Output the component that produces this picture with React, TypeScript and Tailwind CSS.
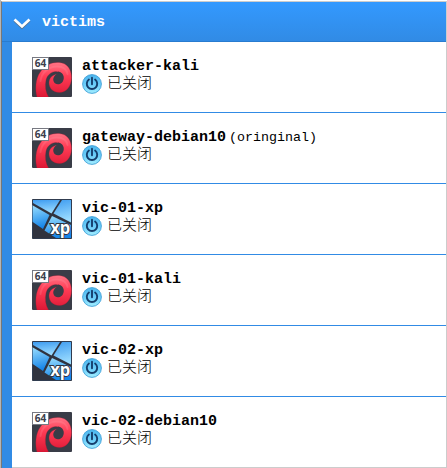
import React from 'react';

type Machine = { name: string; snapshot?: string; os: 'debian' | 'xp' };

const machines: Machine[] = [
  { name: 'attacker-kali', os: 'debian' },
  { name: 'gateway-debian10', snapshot: 'oringinal', os: 'debian' },
  { name: 'vic-01-xp', os: 'xp' },
  { name: 'vic-01-kali', os: 'debian' },
  { name: 'vic-02-xp', os: 'xp' },
  { name: 'vic-02-debian10', os: 'debian' },
];

function DebianIcon() {
  return (
    <svg width="40" height="40" viewBox="0 0 40 40" className="shrink-0">
      <defs>
        <linearGradient id="swirl" x1="0" y1="0" x2="0" y2="1">
          <stop offset="0" stopColor="#ff7586" />
          <stop offset="0.4" stopColor="#ff3c55" />
          <stop offset="1" stopColor="#dc1835" />
        </linearGradient>
      </defs>
      <rect width="40" height="40" rx="1" fill="#393c47" />
      <path
        d="M5 40C3 32 3.500 22 8 15.500C13 8 20 5 27 5.500C35 6 39.500 12 39.500 20.500C39.500 29.500 34 35.500 27.500 35.500C21 35.500 17 31 17 26C17 21 20.500 17.500 26 17C23.500 18.500 22 21 22.500 23.500C23.300 26.700 27 27.500 29.500 25C32.500 21.500 31 16.500 27 15C21 13 15.500 17 14 23C12.700 29 13.500 35 16.500 40Z"
        fill="url(#swirl)" stroke="#b01930" strokeWidth="0.3"
      />
      <path d="M26.500 16C22 18 20.500 21.500 21.700 24.500C23 27.700 27.500 28.500 30.500 25C33.500 20.500 31 15 26 14.500Z" fill="#393c47" />
      <path d="M8.500 24C9.500 16 16 9.500 25 9.500C31.500 9.500 35 13 35.500 17" fill="none" stroke="#ffa4b0" strokeWidth="2" strokeLinecap="round" opacity="0.2" />
      <rect x="0.500" y="0.500" width="16" height="12" fill="#fff" stroke="#777982" />
      <text x="8.500" y="10.300" textAnchor="middle" fontFamily="'Open Sans', sans-serif" fontWeight="700" fontSize="10" textLength="11.500" lengthAdjust="spacingAndGlyphs" fill="#3c404c">64</text>
    </svg>
  );
}

function XpIcon() {
  return (
    <svg width="40" height="40" viewBox="0 0 40 40" className="shrink-0">
      <defs>
        <linearGradient id="pane" x1="0" y1="0" x2="0.2" y2="1">
          <stop offset="0" stopColor="#3d9bf0" />
          <stop offset="1" stopColor="#9bdcff" />
        </linearGradient>
        <linearGradient id="lowerPane" x1="0" y1="0" x2="0.2" y2="1">
          <stop offset="0" stopColor="#9ce0ff" />
          <stop offset="1" stopColor="#1685e8" />
        </linearGradient>
      </defs>
      <rect width="40" height="40" rx="1" fill="#30333f" />
      <path d="M0 6L17.500 16L11 30L0 22.500Z" fill="url(#lowerPane)" />
      <path d="M1 1H28L19.500 14.500L1 4Z" fill="url(#pane)" />
      <path d="M30 1H39V23.500L21.500 14.500Z" fill="url(#pane)" />
      <path d="M20 17L39 26V39H24L12.500 31.500Z" fill="url(#lowerPane)" />
      <rect x="0.500" y="0.500" width="39" height="39" rx="1" fill="none" stroke="#30435c" strokeOpacity="0.6" />
      <text x="18.300" y="35" fontFamily="'Open Sans', sans-serif" fontWeight="700" fontSize="18" textLength="20" lengthAdjust="spacingAndGlyphs" fill="#fff" stroke="#303541" strokeWidth="2" paintOrder="stroke">xp</text>
    </svg>
  );
}

function PowerIcon() {
  return (
    <svg width="20" height="20" viewBox="0 0 20 20" className="shrink-0">
      <defs>
        <linearGradient id="power" x1="0" y1="0" x2="0" y2="1">
          <stop offset="0" stopColor="#4bb5ed" />
          <stop offset="0.6" stopColor="#70d1fb" />
          <stop offset="1" stopColor="#a5efff" />
        </linearGradient>
      </defs>
      <circle cx="10" cy="10" r="9.400" fill="url(#power)" stroke="#419fd7" strokeWidth="0.900" />
      <path d="M6.900 5.600A5.200 5.200 0 1 0 13.100 5.600M10 3.700V10.300" fill="none" stroke="#153e6c" strokeWidth="1.900" strokeLinecap="round" />
    </svg>
  );
}

function MachineRow({ machine }: { machine: Machine }) {
  return (
    <li className="flex h-[71px] border-b border-[#318be5] pt-[15px] pl-5 last:border-[#cccccc]">
      {machine.os === 'xp' ? <XpIcon /> : <DebianIcon />}
      <div className="ml-2.5 min-w-0">
        <div className="flex h-[17px] items-baseline whitespace-pre pt-0.5 leading-4">
          <span className="text-[15px] font-bold">{machine.name}</span>
          {machine.snapshot && <span className="ml-[3px] text-[13.33px]">({machine.snapshot})</span>}
        </div>
        <div className="flex h-5 items-center">
          <PowerIcon />
          <span className="-mt-1 ml-[5px] font-['Noto_Sans_CJK_SC',sans-serif] text-[15px] font-light leading-4">已关闭</span>
        </div>
      </div>
    </li>
  );
}

export default function App() {
  return (
    <div className="h-[468px] w-[447px] overflow-hidden border-l border-[#b5b5b5] bg-white pt-px font-['Liberation_Mono','Noto_Sans_CJK_SC',monospace] text-black">
      <section className="h-[467px] border-t border-r border-l border-t-[#cccccc] border-r-[#cccccc] border-l-[#777777] bg-[#318be5]">
        <header className="flex h-10 items-center border-b border-[#287cd0] bg-linear-to-b from-[#3399ff] to-[#318be5] pl-[11px] text-white">
          <svg width="18" height="12" viewBox="0 0 18 12" className="mt-[5px] drop-shadow-[0_1px_0_#566f88]">
            <path d="M1.500 1.500L9 8.500L16.500 1.500" fill="none" stroke="#fff" strokeWidth="2.700" />
          </svg>
          <h1 className="mt-[3px] ml-[11px] text-[15px] font-bold leading-5">victims</h1>
        </header>
        <ul className="ml-2.5 bg-white">
          {machines.map((machine) => <MachineRow key={machine.name} machine={machine} />)}
        </ul>
      </section>
    </div>
  );
}
